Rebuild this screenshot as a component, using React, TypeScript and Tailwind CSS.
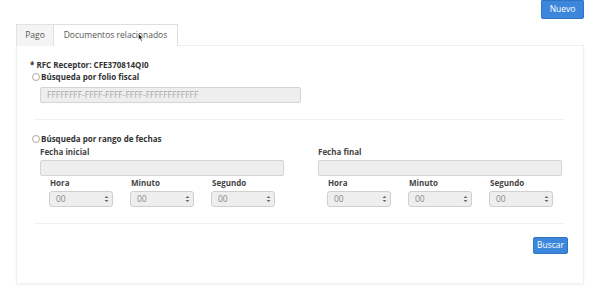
export default function App() {
  const font = { fontFamily: '"Open Sans", "Liberation Sans", sans-serif' }

  const Select = () => (
    <div className="w-[64px] h-[16px] bg-[#eeeeee] border border-[#cfcfcf] rounded-[3px] flex items-center justify-between pl-[6px] pr-[3px] text-[8.5px] text-[#8a8a8a]">
      <span>00</span>
      <svg width="5" height="8" viewBox="0 0 5 8">
        <path d="M0.5 3 L2.5 1 L4.5 3 Z" fill="#666" />
        <path d="M0.5 5 L2.5 7 L4.5 5 Z" fill="#666" />
      </svg>
    </div>
  )

  const DateColumn = ({ label }: { label: string }) => (
    <div className="w-[244px]">
      <div className="text-[8px] font-bold text-[#444] leading-[10px] mb-[3px]">{label}</div>
      <div className="h-[16px] bg-[#eeeeee] border border-[#d4d4d4] rounded-[2px]" />
      <div className="flex gap-[17px] pl-[9px] mt-[2px]">
        {["Hora", "Minuto", "Segundo"].map((t) => (
          <div key={t}>
            <div className="text-[8px] font-bold text-[#444] leading-[10px] pl-[1px] mb-[3px]">{t}</div>
            <Select />
          </div>
        ))}
      </div>
    </div>
  )

  const Radio = () => (
    <span className="inline-block w-[8px] h-[8px] rounded-full border border-[#aaa] bg-white mr-[1px]" />
  )

  return (
    <div className="w-[596px] h-[286px] bg-white relative overflow-hidden" style={font}>
      <div className="flex justify-end pr-[12px]">
        <button className="w-[43px] h-[19px] bg-[#3c86dc] text-white text-[8.5px] rounded-b-[2px] rounded-t-[1px] border border-[#2f74c4]">
          Nuevo
        </button>
      </div>

      <div className="ml-[16px] w-[568px] mt-[5px]">
        <div className="flex h-[22px] text-[8.5px] text-[#555]">
          <div className="w-[38px] flex items-center justify-center bg-[#f4f4f4] border border-[#e2e2e2] border-b-0">
            Pago
          </div>
          <div className="w-[124px] flex items-center justify-center bg-white border border-[#dedede] border-b-0 border-l-0 relative">
            Documentos relacionados
            <svg className="absolute left-[84px] top-[8px]" width="6" height="9" viewBox="0 0 6 9">
              <path d="M0.5 0.5 L0.5 7 L2 5.6 L3.2 8.3 L4.2 7.9 L3 5.3 L5 5.2 Z" fill="#222" stroke="#fff" strokeWidth="0.5" />
            </svg>
          </div>
          <div className="flex-1 border-b border-[#eeeeee]" />
        </div>

        <div className="h-[238px] border border-t-0 border-[#f0f0f0] shadow-[0_2px_3px_rgba(0,0,0,0.04)] pl-[13px] pr-[18px] pt-[14px]">
          <div className="text-[8px] font-bold text-[#333] leading-[10px]">* RFC Receptor: CFE370814QI0</div>
          <div className="flex items-center text-[8px] font-bold text-[#333] leading-[10px] mt-[2px] pl-[2px]">
            <Radio />
            Búsqueda por folio fiscal
          </div>
          <div className="ml-[10px] mt-[5px] w-[261px] h-[16px] bg-[#eeeeee] border border-[#d4d4d4] rounded-[2px] flex items-center pl-[6px] text-[8.5px] text-[#a8a8a8]">
            FFFFFFFF-FFFF-FFFF-FFFF-FFFFFFFFFFFF
          </div>

          <div className="ml-[4px] mt-[16px] border-t border-[#f0f0f0]" />

          <div className="flex items-center text-[8px] font-bold text-[#333] leading-[10px] mt-[14px] pl-[2px]">
            <Radio />
            Búsqueda por rango de fechas
          </div>
          <div className="flex gap-[34px] ml-[10px] mt-[3px]">
            <DateColumn label="Fecha inicial" />
            <DateColumn label="Fecha final" />
          </div>

          <div className="ml-[4px] mt-[16px] border-t border-[#f0f0f0]" />

          <div className="flex justify-end mt-[13px]">
            <button className="w-[35px] h-[17px] bg-[#3c86dc] text-white text-[8.5px] rounded-[2px] border border-[#2f74c4] mr-[-3px]">
              Buscar
            </button>
          </div>
        </div>
      </div>
    </div>
  )
}
